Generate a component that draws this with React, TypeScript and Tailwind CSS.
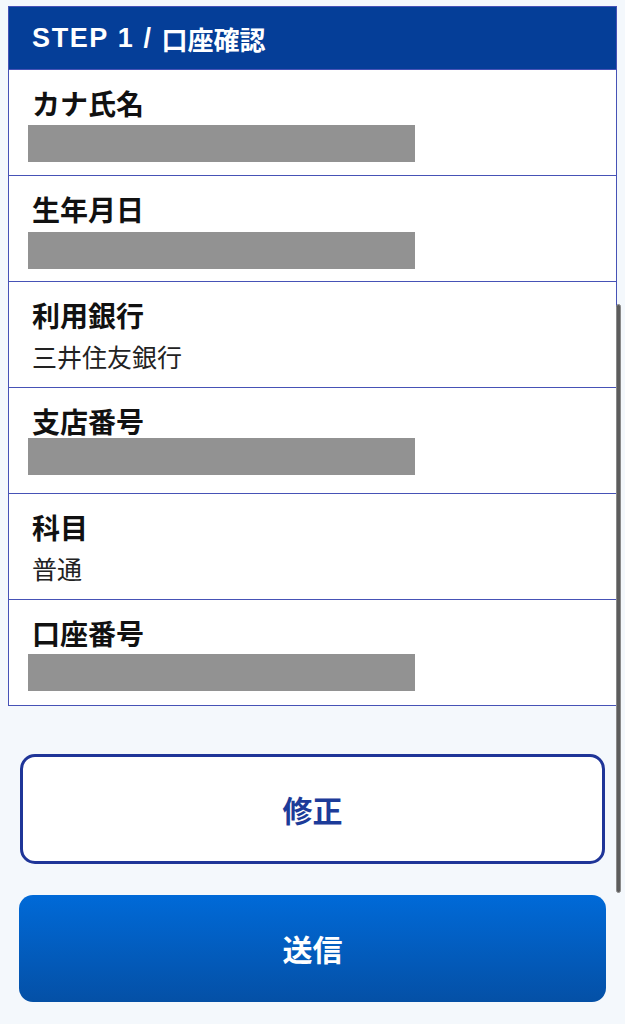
import React from "react";

type Row = {
  label: string;
  value?: string;
  barGap?: string;
};

// 黒塗りバーの位置は行ごとに少しずれている
const rows: Row[] = [
  { label: "カナ氏名", barGap: "mt-[4px]" },
  { label: "生年月日", barGap: "mt-[5px]" },
  { label: "利用銀行", value: "三井住友銀行" },
  { label: "支店番号", barGap: "-mt-[1px]" },
  { label: "科目", value: "普通" },
  { label: "口座番号", barGap: "mt-[3px]" },
];

function ConfirmRow({ row }: { row: Row }) {
  return (
    <div className="h-[106px] border-t border-[#4652b6] pl-[19px] pt-[15px]">
      <div className="h-[36px] pl-[4px] text-[28px] leading-[36px] font-bold text-[#111111]">
        {row.label}
      </div>
      {row.value ? (
        <div className="mt-[5px] h-[36px] pl-[4px] text-[25px] leading-[36px] text-[#222222]">
          {row.value}
        </div>
      ) : (
        <div className={`${row.barGap} h-[37px] w-[387px] bg-[#929292]`} />
      )}
    </div>
  );
}

export default function App() {
  return (
    <div className="relative min-h-screen bg-[#f4f8fc] font-['Noto_Sans_CJK_JP','Noto_Sans',sans-serif]">
      <div className="px-[8px] pt-[6px]">
        <div className="border border-[#4652b6] bg-white">
          <div className="flex h-[62px] items-center bg-[#053e98] pl-[23px] text-white font-bold">
            <span className="font-['Liberation_Sans',sans-serif] text-[27px] tracking-[0.06em]">
              STEP 1 /
            </span>
            <span className="ml-[9px] text-[26px]">口座確認</span>
          </div>
          {rows.map((row) => (
            <ConfirmRow key={row.label} row={row} />
          ))}
        </div>
      </div>

      <div className="flex flex-col gap-[31px] px-[19px] pt-[48px] pb-[22px]">
        <button className="mx-[1px] flex h-[110px] items-center justify-center rounded-[15px] border-[3px] border-[#1f3598] bg-white text-[30px] font-bold text-[#1c3b99]">
          修正
        </button>
        <button className="flex h-[107px] items-center justify-center rounded-[14px] bg-gradient-to-b from-[#006ad8] to-[#0450a6] text-[30px] font-bold text-white">
          送信
        </button>
      </div>

      <div className="absolute right-[4px] top-[304px] h-[589px] w-[5px] rounded-full border border-[#8a8a8a] bg-[#5c5c5c]" />
    </div>
  );
}
